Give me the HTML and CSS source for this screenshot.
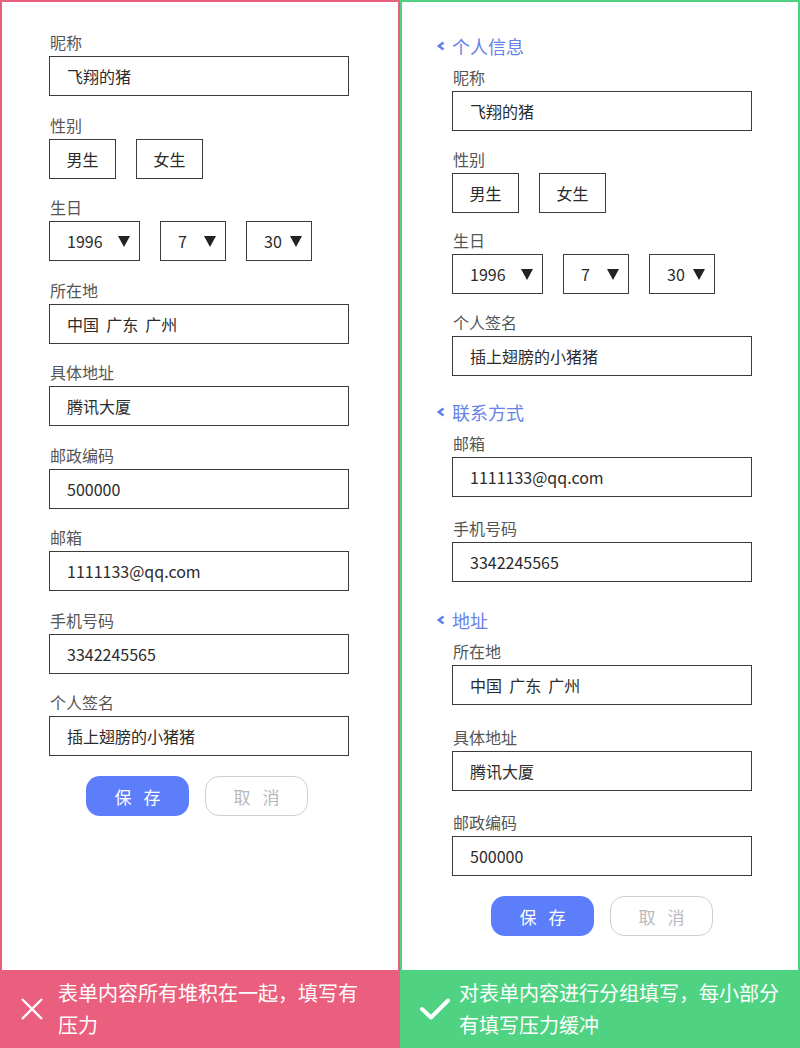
FILE: index.html
```html
<!DOCTYPE html>
<html lang="zh-CN">
<head>
  <meta charset="UTF-8">
  <title>表单分组对比</title>
  <link rel="stylesheet" href="styles.css">
</head>
<body>

  <div class="compare">

    <!-- 错误示例 -->
    <div class="panel panel-bad">
      <div class="card">
        <div class="group">
          <div class="field">
            <label>昵称</label>
            <div class="input">飞翔的猪</div>
          </div>
          <div class="field">
            <label>性别</label>
            <div class="choices">
              <span class="choice">男生</span>
              <span class="choice">女生</span>
            </div>
          </div>
          <div class="field">
            <label>生日</label>
            <div class="selects">
              <span class="select select-year">1996 <i class="arrow"></i></span>
              <span class="select">7 <i class="arrow"></i></span>
              <span class="select">30 <i class="arrow"></i></span>
            </div>
          </div>
          <div class="field">
            <label>所在地</label>
            <div class="input">中国&nbsp;&nbsp;广东&nbsp;&nbsp;广州</div>
          </div>
          <div class="field">
            <label>具体地址</label>
            <div class="input">腾讯大厦</div>
          </div>
          <div class="field">
            <label>邮政编码</label>
            <div class="input">500000</div>
          </div>
          <div class="field">
            <label>邮箱</label>
            <div class="input">1111133@qq.com</div>
          </div>
          <div class="field">
            <label>手机号码</label>
            <div class="input">3342245565</div>
          </div>
          <div class="field">
            <label>个人签名</label>
            <div class="input">插上翅膀的小猪猪</div>
          </div>
        </div>
        <div class="actions">
          <button class="btn btn-save">保 存</button>
          <button class="btn btn-cancel">取 消</button>
        </div>
      </div>
      <div class="verdict">
        <span class="verdict-icon">
          <svg width="24" height="24" viewBox="0 0 24 24"><path d="M2 2 L22 22 M22 2 L2 22" stroke="#fff" stroke-width="2.4" fill="none"/></svg>
        </span>
        <p class="verdict-text">表单内容所有堆积在一起，填写有压力</p>
      </div>
    </div>

    <!-- 正确示例 -->
    <div class="panel panel-good">
      <div class="card">
        <div class="group">
          <h3 class="group-title"><svg width="8" height="10" viewBox="0 0 8 10"><path d="M6.5 1.5 L1.8 5 L6.5 8.5" stroke="#5f7fea" stroke-width="2.4" fill="none"/></svg>个人信息</h3>
          <div class="field">
            <label>昵称</label>
            <div class="input">飞翔的猪</div>
          </div>
          <div class="field">
            <label>性别</label>
            <div class="choices">
              <span class="choice">男生</span>
              <span class="choice">女生</span>
            </div>
          </div>
          <div class="field">
            <label>生日</label>
            <div class="selects">
              <span class="select select-year">1996 <i class="arrow"></i></span>
              <span class="select">7 <i class="arrow"></i></span>
              <span class="select">30 <i class="arrow"></i></span>
            </div>
          </div>
          <div class="field">
            <label>个人签名</label>
            <div class="input">插上翅膀的小猪猪</div>
          </div>
        </div>
        <div class="group group-loose">
          <h3 class="group-title"><svg width="8" height="10" viewBox="0 0 8 10"><path d="M6.5 1.5 L1.8 5 L6.5 8.5" stroke="#5f7fea" stroke-width="2.4" fill="none"/></svg>联系方式</h3>
          <div class="field">
            <label>邮箱</label>
            <div class="input">1111133@qq.com</div>
          </div>
          <div class="field">
            <label>手机号码</label>
            <div class="input">3342245565</div>
          </div>
        </div>
        <div class="group group-loose">
          <h3 class="group-title"><svg width="8" height="10" viewBox="0 0 8 10"><path d="M6.5 1.5 L1.8 5 L6.5 8.5" stroke="#5f7fea" stroke-width="2.4" fill="none"/></svg>地址</h3>
          <div class="field">
            <label>所在地</label>
            <div class="input">中国&nbsp;&nbsp;广东&nbsp;&nbsp;广州</div>
          </div>
          <div class="field">
            <label>具体地址</label>
            <div class="input">腾讯大厦</div>
          </div>
          <div class="field">
            <label>邮政编码</label>
            <div class="input">500000</div>
          </div>
        </div>
        <div class="actions">
          <button class="btn btn-save">保 存</button>
          <button class="btn btn-cancel">取 消</button>
        </div>
      </div>
      <div class="verdict">
        <span class="verdict-icon">
          <svg width="32" height="24" viewBox="0 0 32 24"><path d="M3 12 L12 20.5 L29 3.5" stroke="#fff" stroke-width="4" stroke-linecap="round" stroke-linejoin="round" fill="none"/></svg>
        </span>
        <p class="verdict-text">对表单内容进行分组填写，每小部分有填写压力缓冲</p>
      </div>
    </div>

  </div>

</body>
</html>
```

FILE: styles.css
```css
body {
  margin: 0;
  font-family: "Noto Sans CJK SC", "Noto Sans", sans-serif;
  color: #333;
  background: #fff;
}
.compare {
  display: grid;
  grid-template-columns: 400px 400px;
  height: 1048px;
}
.panel {
  display: flex;
  flex-direction: column;
}
.card {
  flex: 1;
  box-sizing: border-box;
  border: 2px solid;
  border-bottom: none;
  background: #fff;
}
.panel-bad .card {
  border-color: #ea5f7d;
  padding: 29px 0 0 47px;
}
.panel-good .card {
  border-color: #4fd383;
  padding: 32px 0 0 50px;
}
.group + .group {
  margin-top: 24px;
}
.group-loose + .group-loose {
  margin-top: 26px;
}
.group-title {
  display: flex;
  align-items: center;
  gap: 7px;
  margin: 0 0 8px -15px;
  height: 24px;
  font-size: 18px;
  line-height: 24px;
  font-weight: normal;
  color: #6682e8;
}
.field {
  margin-bottom: 16.5px;
}
.panel-bad .field {
  margin-bottom: 17.5px;
}
.group-loose .field {
  margin-bottom: 20.5px;
}
.group .field:last-child {
  margin-bottom: 0;
}
.field label {
  display: block;
  height: 22px;
  margin: 0 0 3px 1px;
  font-size: 16px;
  line-height: 22px;
  color: #555;
}
.input {
  box-sizing: border-box;
  width: 300px;
  height: 40px;
  padding: 0 17px;
  border: 1px solid #3b3b3b;
  font-size: 16px;
  line-height: 38px;
  color: #2b2b2b;
}
.choices,
.selects {
  display: flex;
  gap: 20px;
}
.choice {
  box-sizing: border-box;
  width: 67px;
  height: 40px;
  border: 1px solid #3b3b3b;
  font-size: 16px;
  line-height: 38px;
  text-align: center;
  color: #2b2b2b;
}
.select {
  box-sizing: border-box;
  display: flex;
  align-items: center;
  justify-content: space-between;
  width: 66px;
  height: 40px;
  padding: 0 9px 0 17px;
  border: 1px solid #3b3b3b;
  font-size: 16px;
  color: #2b2b2b;
}
.select-year {
  width: 91px;
}
.arrow {
  width: 0;
  height: 0;
  border-left: 6.5px solid transparent;
  border-right: 6.5px solid transparent;
  border-top: 11px solid #222;
}
.actions {
  display: flex;
  gap: 16px;
  margin: 20px 0 0 37px;
}
.panel-good .actions {
  margin-left: 39px;
}
.btn {
  box-sizing: border-box;
  width: 103px;
  height: 40px;
  border-radius: 14px;
  font-family: inherit;
  font-size: 17px;
  letter-spacing: 4px;
  padding: 0 0 0 4px;
  cursor: pointer;
}
.btn-save {
  background: #5d7efb;
  color: #fff;
  border: none;
}
.btn-cancel {
  background: #fff;
  color: #b8b8b8;
  border: 1px solid #cfcfcf;
}
.verdict {
  display: flex;
  align-items: center;
  height: 78px;
  color: #fff;
}
.panel-bad .verdict {
  background: #ea5f7d;
}
.panel-good .verdict {
  background: #4fd383;
}
.verdict-icon {
  display: flex;
  justify-content: center;
  box-sizing: border-box;
  width: 58px;
  padding-left: 6px;
  flex-shrink: 0;
}
.panel-good .verdict-icon {
  width: 59px;
  padding-left: 10px;
}
.verdict-text {
  margin: 0;
  font-size: 20px;
  line-height: 32px;
}
.panel-bad .verdict-text {
  width: 310px;
}
.panel-good .verdict-text {
  width: 330px;
}
```
